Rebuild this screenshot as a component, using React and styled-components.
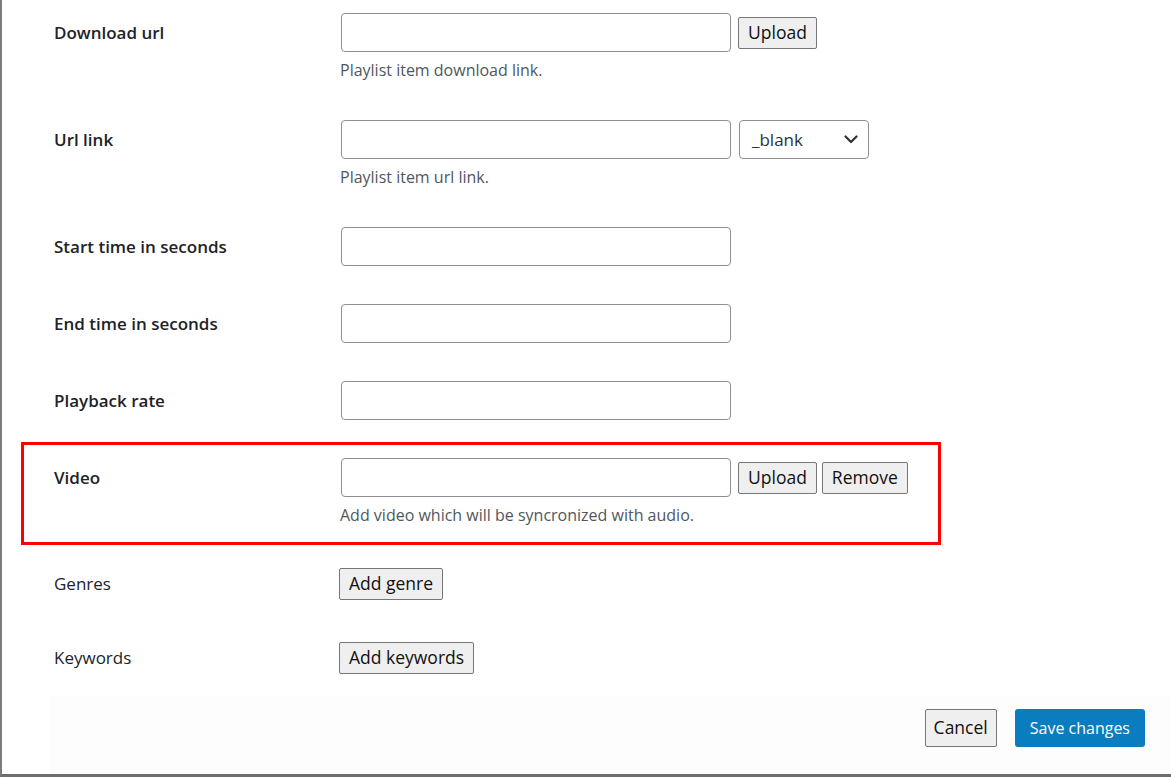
import React from "react";
import styled, { createGlobalStyle } from "styled-components";

const GlobalStyle = createGlobalStyle`
  html, body {
    margin: 0;
    padding: 0;
    background: #ffffff;
  }
  body {
    font-family: "Open Sans", "Noto Sans", sans-serif;
    color: #1d2327;
  }
`;

const Frame = styled.div`
  height: 777px;
  box-sizing: border-box;
  border-left: 2px solid #7c7c7c;
  border-bottom: 3px solid #6e6e6e;
  background: #ffffff;
  overflow: hidden;
  display: flex;
  flex-direction: column;
`;

const FormTable = styled.div`
  margin-left: 19px;
  margin-top: -6px;
  width: 920px;
`;

const Row = styled.div`
  display: grid;
  grid-template-columns: 285px 1fr;
  align-items: start;
  box-sizing: border-box;
  border: 3px solid ${(p) => (p.$highlight ? "#ff0000" : "transparent")};
  margin-top: ${(p) => (p.$highlight ? "3px" : "0")};
  padding: ${(p) => (p.$highlight ? "13px" : p.$compact ? "20px" : "16px")} 30px
    ${(p) => (p.$highlight ? "15px" : "16px")};
`;

const Label = styled.div`
  font-size: 17px;
  font-weight: ${(p) => (p.$plain ? 400 : 600)};
  color: #1d2327;
  line-height: ${(p) => p.$height || 39}px;
  white-space: nowrap;
`;

const Field = styled.div`
  display: flex;
  flex-direction: column;
`;

const Controls = styled.div`
  display: flex;
  align-items: center;
  gap: 5px;
`;

const TextInput = styled.input`
  box-sizing: border-box;
  width: 390px;
  height: 39px;
  margin: 0 2px;
  border: 1px solid #8c8f94;
  border-radius: 4px;
  background: #ffffff;
  padding: 0 8px;
  font-family: inherit;
  font-size: 15px;
`;

const Button = styled.button`
  box-sizing: border-box;
  height: ${(p) => (p.$tall ? 38 : 32)}px;
  padding: 0 ${(p) => (p.$tall ? 8 : 9)}px;
  margin: 0;
  border: 1px solid #767676;
  border-radius: 2px;
  background: #efefef;
  color: #111111;
  font-family: "Open Sans", "Noto Sans", sans-serif;
  font-size: 17.5px;
  line-height: 1;
  cursor: pointer;
`;

const PrimaryButton = styled.button`
  box-sizing: border-box;
  height: 38px;
  padding: 0 15px;
  border: none;
  border-radius: 3px;
  background: #0a7dbe;
  color: #ffffff;
  font-family: "Open Sans", "Noto Sans", sans-serif;
  font-size: 16px;
  cursor: pointer;
`;

const SelectBox = styled.div`
  box-sizing: border-box;
  width: 130px;
  height: 39px;
  margin-left: 1px;
  border: 1px solid #8c8f94;
  border-radius: 4px;
  display: flex;
  align-items: center;
  justify-content: space-between;
  padding: 0 10px 0 12px;
  font-size: 17px;
  color: #2c3338;
`;

const Description = styled.p`
  margin: 6px 0 0 1px;
  font-size: 16px;
  line-height: 24px;
  color: #50575e;
`;

const Footer = styled.div`
  margin-left: 48px;
  margin-top: auto;
  height: 79px;
  box-sizing: border-box;
  background: #fdfdfd;
  display: flex;
  justify-content: flex-end;
  align-items: flex-start;
  gap: 18px;
  padding: 14px 26px 0 0;
`;

const Chevron = () => (
  <svg width="14" height="9" viewBox="0 0 14 9">
    <polyline
      points="1.5,1.5 7,7 12.5,1.5"
      fill="none"
      stroke="#2c3338"
      strokeWidth="2.2"
      strokeLinecap="round"
      strokeLinejoin="round"
    />
  </svg>
);

const inputRows = ["Start time in seconds", "End time in seconds", "Playback rate"];

export default function App() {
  return (
    <>
      <GlobalStyle />
      <Frame>
        <FormTable>
          <Row>
            <Label>Download url</Label>
            <Field>
              <Controls>
                <TextInput type="text" />
                <Button>Upload</Button>
              </Controls>
              <Description>Playlist item download link.</Description>
            </Field>
          </Row>
          <Row>
            <Label>Url link</Label>
            <Field>
              <Controls>
                <TextInput type="text" />
                <SelectBox>
                  _blank
                  <Chevron />
                </SelectBox>
              </Controls>
              <Description>Playlist item url link.</Description>
            </Field>
          </Row>
          {inputRows.map((label) => (
            <Row key={label}>
              <Label>{label}</Label>
              <Controls>
                <TextInput type="text" />
              </Controls>
            </Row>
          ))}
          <Row $highlight>
            <Label>Video</Label>
            <Field>
              <Controls>
                <TextInput type="text" />
                <Button>Upload</Button>
                <Button>Remove</Button>
              </Controls>
              <Description>Add video which will be syncronized with audio.</Description>
            </Field>
          </Row>
          <Row $compact>
            <Label $plain $height={32}>Genres</Label>
            <Controls>
              <Button>Add genre</Button>
            </Controls>
          </Row>
          <Row $compact>
            <Label $plain $height={32}>Keywords</Label>
            <Controls>
              <Button>Add keywords</Button>
            </Controls>
          </Row>
        </FormTable>
        <Footer>
          <Button $tall>Cancel</Button>
          <PrimaryButton>Save changes</PrimaryButton>
        </Footer>
      </Frame>
    </>
  );
}
